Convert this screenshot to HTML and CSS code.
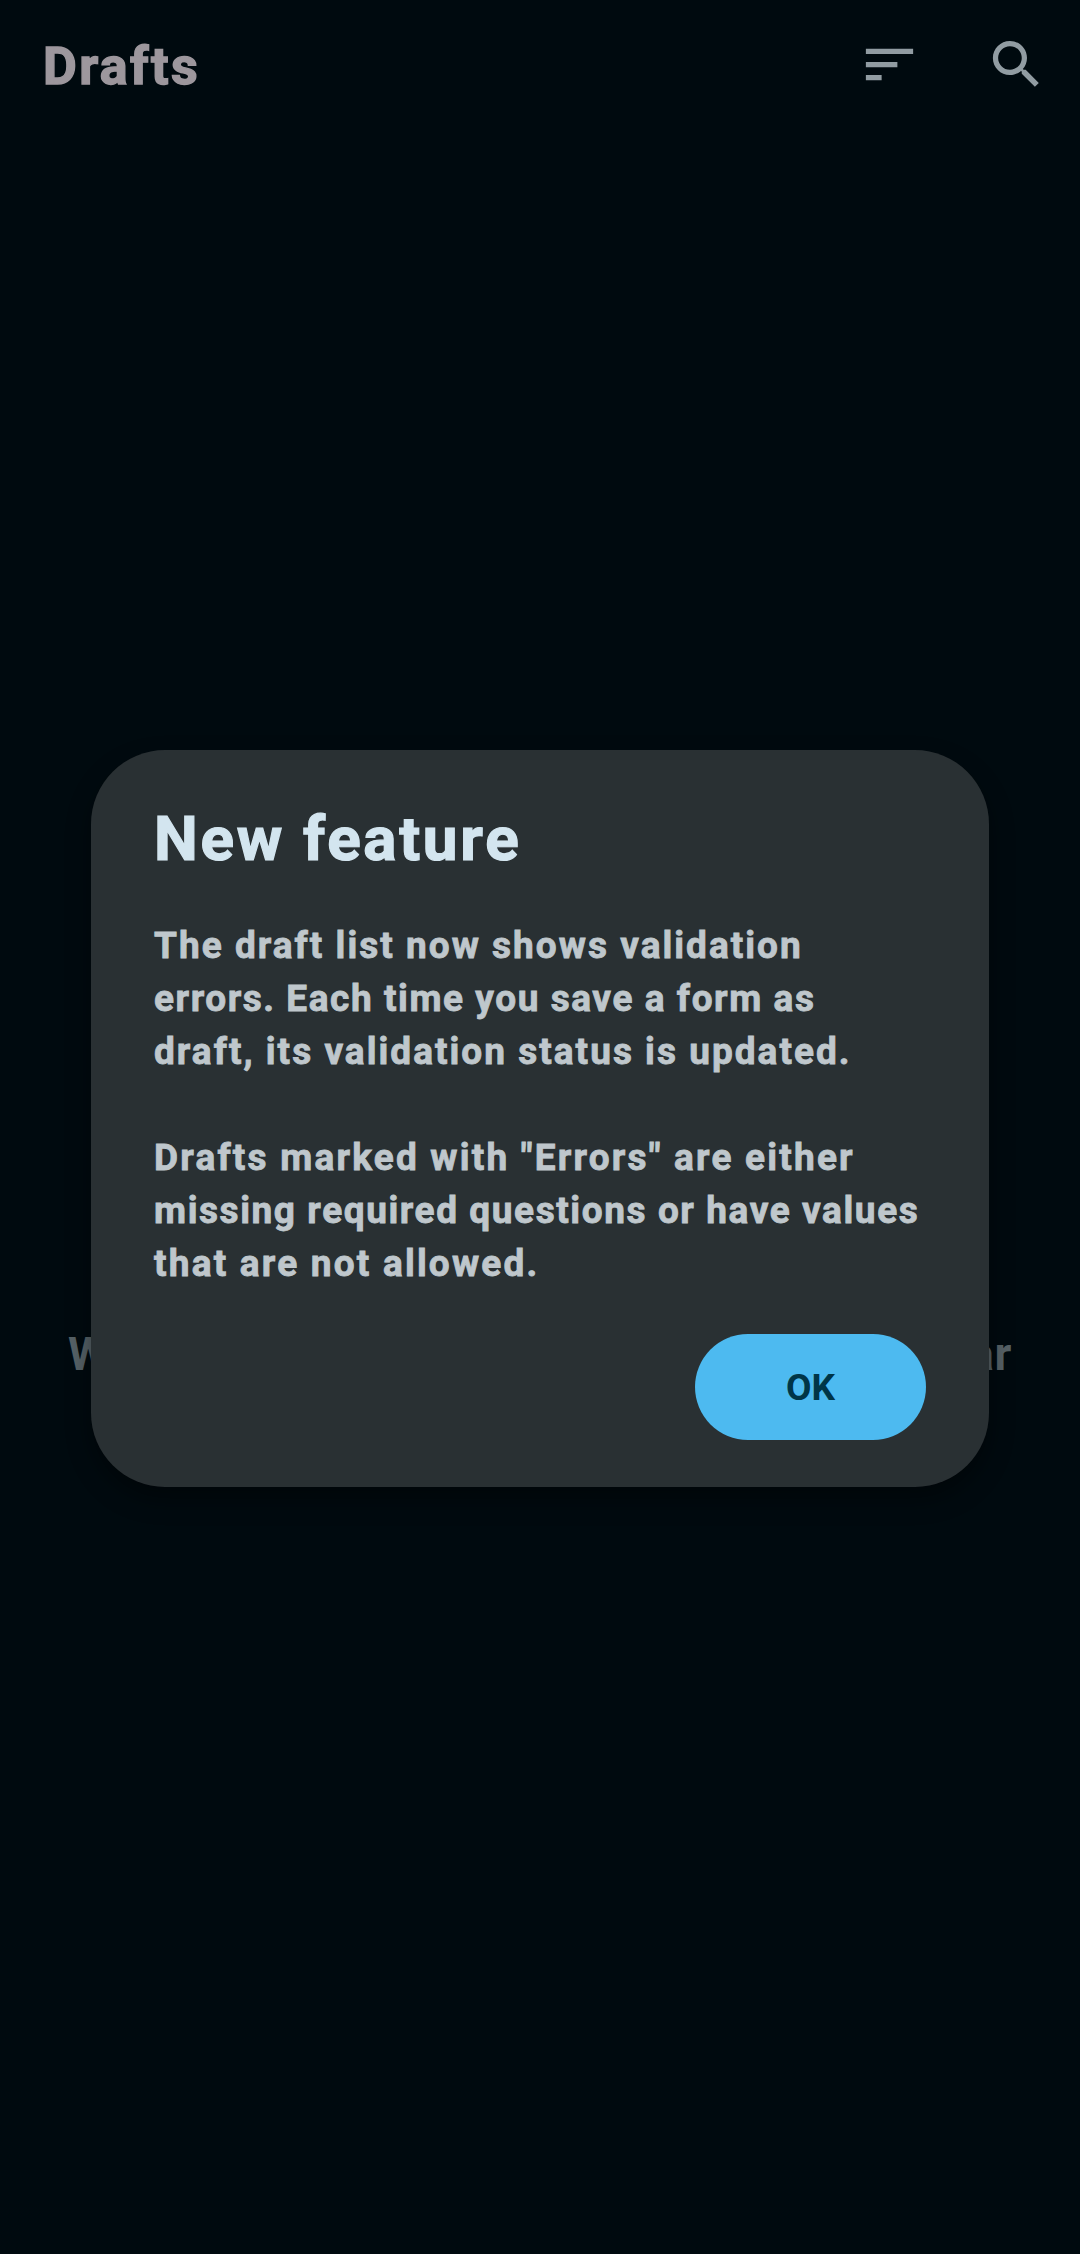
FILE: index.html
```
<!DOCTYPE html>
<html lang="en">
<head>
  <meta charset="UTF-8">
  <meta name="viewport" content="width=device-width, initial-scale=1.0">
  <title>Drafts</title>
  <link rel="stylesheet" href="styles.css">
</head>
<body>
  <header class="app-bar">
    <h1>Drafts</h1>
    <div class="actions">
      <svg class="icon" viewBox="0 0 24 24"><path d="M3 18h6v-2H3v2zM3 6v2h18V6H3zm0 7h12v-2H3v2z"/></svg>
      <svg class="icon" viewBox="0 0 24 24"><path d="M15.5 14h-.79l-.28-.27C15.41 12.59 16 11.11 16 9.5 16 5.91 13.09 3 9.5 3S3 5.91 3 9.5 5.91 16 9.5 16c1.61 0 3.09-.59 4.23-1.57l.27.28v.79l5 4.99L20.49 19l-4.99-5zm-6 0C7.01 14 5 11.99 5 9.5S7.01 5 9.5 5 14 7.01 14 9.5 11.99 14 9.5 14z"/></svg>
    </div>
  </header>

  <main class="empty">
    <p>When you save a form as draft, it will appear</p>
  </main>

  <div class="overlay">
    <div class="dialog" role="dialog">
      <h2>New feature</h2>
      <div class="message">
        <p>
          <span class="line l1">The draft list now shows validation</span>
          <span class="line l2">errors. Each time you save a form as</span>
          <span class="line l3">draft, its validation status is updated.</span>
        </p>
        <p>
          <span class="line l4">Drafts marked with "Errors" are either</span>
          <span class="line l5">missing required questions or have values</span>
          <span class="line l6">that are not allowed.</span>
        </p>
      </div>
      <button class="btn">OK</button>
    </div>
  </div>
</body>
</html>
```
FILE: styles.css
```
* {
  box-sizing: border-box;
}

body {
  margin: 0;
  height: 2254px;
  position: relative;
  overflow: hidden;
  display: flex;
  flex-direction: column;
  background-color: #000a0f;
  font-family: Roboto, "Liberation Sans", sans-serif;
  font-weight: bold;
}

h1, h2, p {
  margin: 0;
}

/* Top bar */
.app-bar {
  display: flex;
  justify-content: space-between;
  align-items: center;
  height: 129px;
  padding: 0 32px 0 43px;
}

.app-bar h1 {
  font-size: 52px;
  line-height: 60px;
  letter-spacing: 2.4px;
  padding-top: 5px;
  color: #9d979d;
  -webkit-text-stroke: 1.4px #9d979d;
}

.actions {
  display: flex;
  gap: 64px;
}

.icon {
  width: 63px;
  height: 63px;
  fill: #919ca2;
}

/* Empty list message */
.empty {
  flex: 1;
  display: flex;
  justify-content: center;
  align-items: center;
  padding-top: 325px;
}

.empty p {
  font-size: 46px;
  line-height: 54px;
  letter-spacing: 0.7px;
  white-space: nowrap;
  color: #566166;
}

/* Dialog */
.overlay {
  position: absolute;
  inset: 0;
  display: flex;
  justify-content: center;
  align-items: center;
  padding-bottom: 17px;
}

.dialog {
  display: flex;
  flex-direction: column;
  width: 898px;
  height: 737px;
  padding: 52px 63px 47px;
  border-radius: 74px;
  background-color: #293033;
  box-shadow: 0 12px 24px rgba(0, 0, 0, 0.4);
}

.dialog h2 {
  font-size: 62px;
  line-height: 74px;
  letter-spacing: 2.7px;
  color: #d3e5ef;
  -webkit-text-stroke: 1.2px #d3e5ef;
}

.message {
  display: flex;
  flex-direction: column;
  gap: 53px;
  margin-top: 43px;
  font-size: 37px;
  line-height: 53px;
  color: #bfc7cc;
  -webkit-text-stroke: 0.8px #bfc7cc;
}

.line {
  display: block;
  white-space: nowrap;
}

.l1 { letter-spacing: 2.02px; }
.l2 { letter-spacing: 1.56px; }
.l3 { letter-spacing: 2.02px; }
.l4 { letter-spacing: 2.2px; }
.l5 { letter-spacing: 1.58px; }
.l6 { letter-spacing: 2.2px; }

.btn {
  align-self: flex-end;
  margin-top: auto;
  width: 231px;
  height: 106px;
  padding: 0;
  border: none;
  border-radius: 53px;
  background-color: #4dbaf0;
  color: #003547;
  font: bold 37px Roboto, "Liberation Sans", sans-serif;
}
```
